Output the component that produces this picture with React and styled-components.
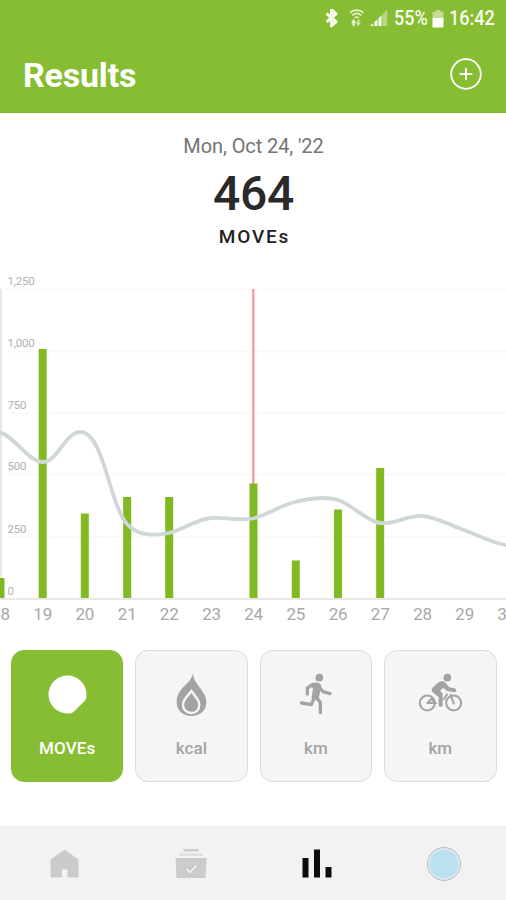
import React, { useState } from 'react';
import styled, { createGlobalStyle } from 'styled-components';

const GlobalStyle = createGlobalStyle`
    * {
        box-sizing: border-box;
    }
    body {
        margin: 0;
        background: #fff;
        font-family: Roboto, 'Liberation Sans', sans-serif;
    }
    svg {
        display: block;
    }
`;

const Screen = styled.div`
    display: flex;
    flex-direction: column;
    width: 506px;
    height: 900px;
    overflow: hidden;
    background: #fff;
`;

const Header = styled.header`
    height: 113px;
    flex: none;
    background: #87bd32;
    border-bottom: 1px solid #7fb329;
    color: #fff;
`;

const StatusBar = styled.div`
    display: flex;
    align-items: center;
    justify-content: flex-end;
    height: 37px;
    padding-right: 11px;
`;

const StatusText = styled.span`
    width: ${(props) => props.$width}px;
    margin-left: 5px;
    font-size: 21px;
    font-weight: 500;
    line-height: 37px;
    white-space: nowrap;
    color: #f8fcef;
    transform: scaleX(0.86);
    transform-origin: left center;
`;

const TitleBar = styled.div`
    display: flex;
    align-items: center;
    justify-content: space-between;
    height: 75px;
    padding: 0 24px 0 23px;
`;

const Title = styled.h1`
    margin: 0;
    font-size: 34px;
    font-weight: 700;
    line-height: 74px;
    letter-spacing: -0.2px;
`;

const AddButton = styled.button`
    width: 32px;
    height: 32px;
    margin-top: -2px;
    padding: 0;
    border: none;
    background: none;
    color: inherit;
`;

const Summary = styled.section`
    display: flex;
    flex-direction: column;
    align-items: center;
    height: 152px;
    flex: none;
    padding-top: 20px;
`;

const DateText = styled.div`
    font-size: 20px;
    line-height: 26px;
    letter-spacing: -0.1px;
    padding-left: 1px;
    color: #747474;
`;

const Total = styled.div`
    font-size: 48px;
    font-weight: 500;
    line-height: 56px;
    margin-top: 7px;
    padding-left: 1px;
    letter-spacing: -0.2px;
    color: #2a2a2a;
`;

const Unit = styled.div`
    font-size: 19px;
    line-height: 24px;
    margin-top: 3px;
    letter-spacing: 1.8px;
    padding-left: 3px;
    font-weight: 500;
    color: #222;
`;

const ChartSvg = styled.svg`
    flex: none;
    width: 506px;
    height: 373px;

    text {
        font-family: Roboto, 'Liberation Sans', sans-serif;
    }
`;

const YLabel = styled.text`
    font-size: 11.5px;
    letter-spacing: -0.2px;
    fill: #b0b0b0;
`;

const XLabel = styled.text`
    font-size: 17px;
    letter-spacing: -0.2px;
    text-anchor: middle;
    fill: #a8a8a8;
`;

const Cards = styled.div`
    display: grid;
    grid-template-columns: repeat(4, 1fr);
    gap: 12px;
    height: 132px;
    flex: none;
    margin-top: 12px;
    padding: 0 9.5px 0 11px;
`;

const Card = styled.button`
    display: flex;
    flex-direction: column;
    align-items: center;
    padding: 0;
    border: 1px solid ${(props) => (props.$active ? '#87bd32' : '#dadada')};
    border-radius: 13px;
    background: ${(props) => (props.$active ? '#87bd32' : '#f5f5f5')};
    color: ${(props) => (props.$active ? '#fff' : '#a3a3a3')};
    font-family: inherit;
`;

const CardIcon = styled.span`
    display: flex;
    align-items: center;
    justify-content: center;
    height: 44px;
    margin-top: 21px;
`;

const CardLabel = styled.span`
    margin-top: 22px;
    font-size: 17px;
    font-weight: 500;
    line-height: 20px;
    letter-spacing: 0.1px;
`;

const TabBar = styled.nav`
    display: grid;
    grid-template-columns: repeat(4, 1fr);
    height: 74px;
    flex: none;
    margin-top: auto;
    background: #f2f2f2;
    border-top: 1px solid #ededed;
`;

const Tab = styled.button`
    display: flex;
    align-items: center;
    justify-content: center;
    padding: 0 0 0 1.5px;
    border: none;
    background: none;
    color: ${(props) => (props.$active ? '#0c0c0c' : '#cbcbcb')};
`;

const Avatar = styled.span`
    width: 34px;
    height: 34px;
    border: 1.5px solid #bdbdbd;
    border-radius: 50%;
    background: #b9e1f0;
    box-shadow: inset 0 0 0 1.5px #e6eef0;
`;

const BatterySvg = styled.svg`
    width: 12px;
    height: 18px;
    margin-left: 4px;
`;

// bluetooth, wifi and signal in one strip
const StatusIcons = () => (
    <svg width="66" height="20" viewBox="322 9 66 20">
        <path
            d="M325.5 13.5l9.5 8.2-4.5 4.300V9.700l4.500 4.100-9.500 8.200"
            fill="none"
            stroke="#f8fcef"
            strokeWidth="3"
            strokeLinejoin="round"
        />
        <g fill="none" stroke="#e4f2c8" strokeWidth="1.6">
            <path d="M349 12.8c4-3.6 9.5-3.6 13.5 0" />
            <path d="M351.3 15.5c2.7-2.5 6.3-2.5 9 0" />
            <path d="M353.5 18c1.5-1.3 3-1.3 4.5 0" />
        </g>
        <path d="M350 23l2.600-4 2.600 4h-1.600v3h-2v-3z" fill="#f8fcef" />
        <path d="M354.8 22.5l2.6 3.7 2.6-3.7h-1.6v-3h-2v3z" fill="#d2e6a8" />
        <path
            d="M369 26l3-2.8V26z M373.2 22.2l3.2-3V26h-3.2z M377.4 18.3l3.2-3V26h-3.2z"
            fill="#f8fcef"
        />
        <path d="M381.4 14.5l4.8-5V26h-4.8z" fill="#b9d886" />
    </svg>
);

const BatteryIcon = () => (
    <BatterySvg viewBox="0 0 12 18">
        <path d="M3.5 0h5v1.7h3V8H.5V1.7h3z" fill="#c3dd96" />
        <path d="M.5 8h11v9.5H.5z" fill="#fff" />
    </BatterySvg>
);

const PlusCircle = () => (
    <svg width="32" height="32" viewBox="0 0 32 32" fill="none" stroke="currentColor">
        <circle cx="16" cy="16" r="14.8" strokeWidth="1.8" />
        <path d="M16 9.7v12.6M9.7 16h12.6" strokeWidth="1.8" />
    </svg>
);

const MovesIcon = () => (
    <svg width="39" height="39" viewBox="0 0 39 39">
        <path
            d="M19.5.5A19 19 0 0 1 38.5 19.5C38.5 21.8 38.2 24 37.3 25.3L25.5 37C24 38.3 22 38.5 19.5 38.5A19 19 0 0 1 19.5.5z"
            fill="currentColor"
        />
    </svg>
);

const FlameIcon = () => (
    <svg width="31" height="43" viewBox="528 98 93 129">
        <path
            d="M579 99C579 114 588 128 602 145C613 160 619 170 619 186C619 211 600 227 575 227C549 227 530 211 530 186C530 168 536 155 550 140C565 126 576 116 579 99z"
            fill="currentColor"
        />
        <path
            d="M574 152C582 164 598 177 598 193C598 208 588 218 574 218C560 218 549 208 549 193C549 177 566 164 574 152z"
            fill="currentColor"
            stroke="#f7f7f7"
            strokeWidth="7"
        />
    </svg>
);

const RunnerIcon = () => (
    <svg width="34" height="42" viewBox="145 101 102 126">
        <circle cx="206" cy="115" r="11.5" fill="currentColor" />
        <g
            fill="none"
            stroke="currentColor"
            strokeWidth="10"
            strokeLinecap="round"
            strokeLinejoin="round"
        >
            <path d="M186 136L170 146V164" />
            <path d="M203 139L217 157L238 163" />
            <path d="M190 176L182 196L153 191" />
            <path d="M197 173L209 190V220" />
        </g>
        <path
            d="M176 136C186 128 203 128 209 135C214 140 211 148 209 153L204 179L188 186C183 181 182 174 184 168L187 147z"
            fill="currentColor"
        />
    </svg>
);

const BikeIcon = () => (
    <svg width="45" height="42" viewBox="503 101 135 126">
        <circle cx="591" cy="115" r="11.5" fill="currentColor" />
        <g fill="none" stroke="currentColor" strokeWidth="6">
            <circle cx="531" cy="191" r="22.5" />
            <circle cx="610" cy="191" r="22.5" />
            <path d="M531 191L548 174M529 191H555L543 179" />
            <path d="M600 164L611 195M591 163L580 181" />
        </g>
        <path
            d="M544 153C543 147 558 134 567 128C572 124 581 125 585 130L597 144L613 147C620 149 619 159 612 159L594 156C590 155 584 150 579 145L569 154L575 160C578 164 577 171 577 176V198C577 204 565 204 565 198V174L551 162C547 159 544 158 544 153z"
            fill="currentColor"
        />
    </svg>
);

const HomeIcon = () => (
    <svg width="29" height="29" viewBox="0 0 29 29">
        <path
            d="M14.5.5L28.5 10.5V28.5H17.5V20.5H12V28.5H.5V10.5z"
            fill="currentColor"
        />
    </svg>
);

const ProgramIcon = () => (
    <svg width="32" height="31" viewBox="0 0 32 31">
        <path d="M8.5 1H23.5V3.5H8.5z" fill="currentColor" />
        <path d="M4.5 5.5H27.5V8H4.5z" fill="#dedede" />
        <path d="M.5 10H31.5L30.5 30H1.5z" fill="currentColor" />
        <path
            d="M11.5 21l3.5 3.3 6.5-6.8"
            fill="none"
            stroke="#f2f2f2"
            strokeWidth="1.8"
        />
    </svg>
);

const StatsIcon = () => (
    <svg width="30" height="29" viewBox="0 0 30 29">
        <path
            d="M.5 9h6v19.5h-6zM12 .5h6v28h-6zM23.5 18h6v10.5h-6z"
            fill="currentColor"
        />
    </svg>
);

const BASE_Y = 598;

const gridLines = [
    { label: '1,250', y: 289.5 },
    { label: '1,000', y: 351.5 },
    { label: '750', y: 413 },
    { label: '500', y: 474.5 },
    { label: '250', y: 537 },
    { label: '0', y: 599 },
];

const days = [
    { label: '18', x: 0.5, top: 578 },
    { label: '19', x: 42.7, top: 349 },
    { label: '20', x: 84.8, top: 513.5 },
    { label: '21', x: 127.2, top: 497 },
    { label: '22', x: 169.2, top: 497 },
    { label: '23', x: 211.5 },
    { label: '24', x: 253.5, top: 483.5 },
    { label: '25', x: 295.8, top: 560.5 },
    { label: '26', x: 338, top: 509.5 },
    { label: '27', x: 380.2, top: 468 },
    { label: '28', x: 422.5 },
    { label: '29', x: 464.7 },
    { label: '30', x: 506.5 },
];

const trend =
    'M-2 431.5C14 435 28 462 43 462C57 462 66 432 80 432C104 432 108 501 127 524' +
    'C137 536 155 536 169 533C183 530 197 519 211 518C225 517 239 521 253 518.5' +
    'C267 515 281 505 295 502C309 498.5 325 496 338 500C353 505 366 521 380 523' +
    'C394 525 408 515 422 516C436 517 450 525 464 530C478 535 492 543 508 545.5';

const Chart = () => (
    <ChartSvg viewBox="0 265 506 373">
        {gridLines.slice(0, 5).map(({ label, y }) => (
            <path key={label} d={`M7 ${y}H506`} stroke="#f8f8f8" strokeWidth="1.5" />
        ))}
        <path d="M1 289V598" stroke="#e8e8e8" strokeWidth="2" />
        <path d="M0 599H506" stroke="#e0e0e0" strokeWidth="1.5" />
        {gridLines.map(({ label, y }) => (
            <YLabel key={label} x="7.5" y={y - 4.5}>
                {label}
            </YLabel>
        ))}
        <path d="M253.3 289V484" stroke="#fb9a9c" strokeWidth="2.4" />
        {days
            .filter((day) => day.top)
            .map(({ label, x, top }) => (
                <rect
                    key={label}
                    x={x - 4}
                    y={top}
                    width="8"
                    height={BASE_Y - top}
                    fill="#80ba20"
                />
            ))}
        <path d={trend} fill="none" stroke="#d0d7d9" strokeWidth="3.8" />
        {days.map(({ label, x }) => (
            <XLabel key={label} x={x} y="620">
                {label}
            </XLabel>
        ))}
    </ChartSvg>
);

const metrics = [
    { id: 'moves', label: 'MOVEs', Icon: MovesIcon },
    { id: 'kcal', label: 'kcal', Icon: FlameIcon },
    { id: 'run', label: 'km', Icon: RunnerIcon },
    { id: 'bike', label: 'km', Icon: BikeIcon },
];

export const App = () => {
    const [metric, setMetric] = useState('moves');

    return (
        <Screen>
            <GlobalStyle />
            <Header>
                <StatusBar>
                    <StatusIcons />
                    <StatusText $width={34}>55%</StatusText>
                    <BatteryIcon />
                    <StatusText $width={46}>16:42</StatusText>
                </StatusBar>
                <TitleBar>
                    <Title>Results</Title>
                    <AddButton aria-label="Add result">
                        <PlusCircle />
                    </AddButton>
                </TitleBar>
            </Header>
            <Summary>
                <DateText>Mon, Oct 24, '22</DateText>
                <Total>464</Total>
                <Unit>MOVEs</Unit>
            </Summary>
            <Chart />
            <Cards>
                {metrics.map(({ id, label, Icon }) => (
                    <Card key={id} $active={metric === id} onClick={() => setMetric(id)}>
                        <CardIcon>
                            <Icon />
                        </CardIcon>
                        <CardLabel>{label}</CardLabel>
                    </Card>
                ))}
            </Cards>
            <TabBar>
                <Tab aria-label="Home">
                    <HomeIcon />
                </Tab>
                <Tab aria-label="Program">
                    <ProgramIcon />
                </Tab>
                <Tab $active aria-label="Results">
                    <StatsIcon />
                </Tab>
                <Tab aria-label="Profile">
                    <Avatar />
                </Tab>
            </TabBar>
        </Screen>
    );
};

export default App;
